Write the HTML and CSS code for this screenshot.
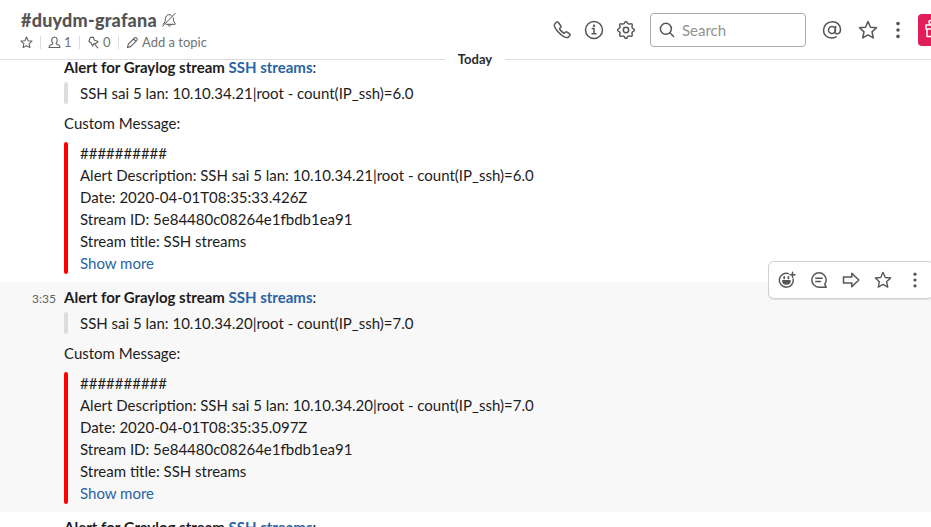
FILE: index.html
```html
<!DOCTYPE html>
<html lang="en">
<head>
<meta charset="utf-8">
<title>duydm-grafana</title>
<link rel="stylesheet" href="styles.css">
</head>
<body>
<svg width="0" height="0" class="defs">
  <symbol id="star" viewBox="0 0 20 20"><path d="M10 1.500l2.500 5.700 6 .6-4.500 4.100 1.300 6L10 14.900l-5.300 3 1.300-6-4.500-4.100 6-.6z"/></symbol>
  <symbol id="dots" viewBox="0 0 20 20"><g fill="currentColor" stroke="none"><circle cx="10" cy="3.600" r="1.800"/><circle cx="10" cy="10" r="1.800"/><circle cx="10" cy="16.400" r="1.800"/></g></symbol>
</svg>
<div class="app">
  <header class="header">
    <div class="channel">
      <h1 class="name"><span>#duydm-grafana</span>
        <svg class="icon bell" viewBox="0 0 16 16"><path d="M3.200 11.200C4.800 9.600 4 7 5 4.700C6.200 2 9.800 2 11 4.200M12.300 6c.1 2.300.2 3.700 1.900 5.500v.8H5.200M7 12.500c0 2.300 3 2.300 3 0M1.500 14.300L14.200 1.400M3.200 11.200l-1.100.9"/></svg>
      </h1>
      <div class="meta">
        <svg class="icon s13" viewBox="0 0 20 20"><use href="#star"/></svg>
        <i class="sep"></i>
        <svg class="icon s13" viewBox="0 0 13 13"><path d="M6.500 1C9.800 1 9.600 5 8.600 6.600 8 7.800 8 8 8.800 8.300l1.700.6c1 .4 1.500 1.200 1.500 2.600H1c0-1.400.5-2.200 1.500-2.600l1.700-.6C5 8 5 7.800 4.400 6.600 3.400 5 3.200 1 6.500 1z"/></svg>
        <span class="one">1</span>
        <i class="sep"></i>
        <svg class="icon s13" viewBox="0 0 13 13"><path d="M3.400 1.400l3.100 0 .6 2.600 3.900 1.500-1.600 1.600-2.600.6-1.200 2.400L4.200 7 1.900 5.200zM7.500 8.200l3.400 3.600"/></svg>
        <span class="zero">0</span>
        <i class="sep"></i>
        <svg class="icon s13 pencil" viewBox="0 0 13 13"><path d="M1.500 11.500l.8-3.300L8.500 2c1.500-1.400 3.700.7 2.300 2.300l-6.200 6.300zM7.600 3l2.300 2.300"/></svg>
        <span class="topic">Add a topic</span>
      </div>
    </div>
    <div class="tools">
      <svg class="icon s20" viewBox="0 0 20 20"><path d="M4.500 2.300L2.700 4c-.8 1 0 4 3.500 8s8 6.400 10 5.300l1.600-1.700c.5-.7.400-1.200-.2-1.700l-2.500-1.800c-.7-.5-1.200-.4-1.700.2l-.9 1c-.6.7-5.500-4.200-4.900-4.900l1-.9c.6-.5.600-1.100.1-1.700L6.400 2.500c-.6-.8-1.300-.8-1.900-.2z"/></svg>
      <svg class="icon s20" viewBox="0 0 20 20"><circle cx="10" cy="10" r="8.500"/><path d="M8.300 8.500H10v5M8 13.800h4"/><circle cx="10" cy="5.700" r=".5"/></svg>
      <svg class="icon s20" viewBox="0 0 20 20"><path d="M8.100 3.600Q10-.6 11.900 3.600L13.200 4.100Q17.500 2.500 15.900 6.800L16.400 8.100Q20.600 10 16.400 11.900L15.900 13.200Q17.500 17.500 13.200 15.900L11.900 16.400Q10 20.600 8.100 16.400L6.800 15.900Q2.500 17.500 4.100 13.200L3.600 11.900Q-.6 10 3.600 8.100L4.100 6.800Q2.500 2.500 6.800 4.100z"/><circle cx="10" cy="10" r="2.700"/></svg>
      <label class="search">
        <svg class="icon glass" viewBox="0 0 16 16"><circle cx="6.900" cy="6.800" r="5.500"/><path d="M10.900 10.800l3.700 3.700"/></svg>
        <span>Search</span>
      </label>
      <svg class="icon s20 at" viewBox="0 0 20 20"><circle cx="10" cy="10" r="3.500"/><path d="M13.600 6.500l-.5 5.200c-.2 3.300 5.400 2.800 5.400-1.900C18.500 4.800 15 1.700 10.400 1.700 5.500 1.700 1.500 5.400 1.500 10.200c0 4.600 3.300 7.800 8 7.800 2 0 3.300-.4 4.600-1.100"/></svg>
      <svg class="icon s20 fav" viewBox="0 0 20 20"><use href="#star"/></svg>
      <svg class="icon s20 more" viewBox="0 0 20 20"><use href="#dots"/></svg>
      <div class="gift"><svg class="icon s20" viewBox="0 0 20 20"><path d="M2 6h16v4H2zM3 10h14v7.500H3zM10 6v11M10 6C4 6 4 1.500 6.500 1.500S10 6 10 6s1-4.500 3.500-4.500S16 6 10 6"/></svg></div>
    </div>
  </header>
  <div class="day"><span>Today</span></div>
  <main class="thread">
    <article class="message">
      <div class="title"><b>Alert for Graylog stream <a>SSH streams</a></b>:</div>
      <blockquote class="quote">SSH sai 5 lan: 10.10.34.21|root - count(IP_ssh)=6.0</blockquote>
      <p class="label">Custom Message:</p>
      <div class="attachment">
        <div>##########</div>
        <div>Alert Description: SSH sai 5 lan: 10.10.34.21|root - count(IP_ssh)=6.0</div>
        <div>Date: 2020-04-01T08:35:33.426Z</div>
        <div>Stream ID: 5e84480c08264e1fbdb1ea91</div>
        <div>Stream title: SSH streams</div>
        <div><a>Show more</a></div>
      </div>
    </article>
    <article class="message hovered">
      <time class="time">3:35</time>
      <div class="title"><b>Alert for Graylog stream <a>SSH streams</a></b>:</div>
      <blockquote class="quote">SSH sai 5 lan: 10.10.34.20|root - count(IP_ssh)=7.0</blockquote>
      <p class="label">Custom Message:</p>
      <div class="attachment">
        <div>##########</div>
        <div>Alert Description: SSH sai 5 lan: 10.10.34.20|root - count(IP_ssh)=7.0</div>
        <div>Date: 2020-04-01T08:35:35.097Z</div>
        <div>Stream ID: 5e84480c08264e1fbdb1ea91</div>
        <div>Stream title: SSH streams</div>
        <div><a>Show more</a></div>
      </div>
      <div class="actions">
        <svg class="icon s18" viewBox="0 0 18 18"><path d="M10.500 2.600A7 7 0 1 0 15.200 8M14.500 1.200v5M12 3.700h5"/><path d="M4.800 9.700h7.200c0 4.500-7.200 4.500-7.200 0z" fill="currentColor"/><path d="M6.200 6v1.300M10.400 6v1.300" stroke-width="1.800"/></svg>
        <svg class="icon s18" viewBox="0 0 18 18"><path d="M16.200 16.200H9A7.200 7.200 0 1 1 16.200 9c0 1.800-.6 3-1.500 4.200zM5.800 7.300h6.400M5.800 10.500h4.700"/></svg>
        <svg class="icon s18" viewBox="0 0 18 18"><path d="M1.500 6h8.300V2.200L16.800 9l-7 6.800V12H1.500z"/></svg>
        <svg class="icon s18" viewBox="0 0 20 20"><use href="#star"/></svg>
        <svg class="icon s18 dots" viewBox="0 0 20 20"><use href="#dots"/></svg>
      </div>
    </article>
    <article class="message">
      <div class="title"><b>Alert for Graylog stream <a>SSH streams</a></b>:</div>
    </article>
  </main>
</div>
</body>
</html>
```
FILE: styles.css
```css
* { box-sizing: border-box; }
body {
  margin: 0;
  background: #fff;
  color: #1d1c1d;
  font: 15px/22px Lato, "Liberation Sans", sans-serif;
}
h1, p, blockquote { margin: 0; }
a { color: #2a63a3; }
.defs { position: absolute; }
.app {
  position: relative;
  display: flex;
  flex-direction: column;
  height: 527px;
  overflow: hidden;
}
.icon {
  display: block;
  flex: none;
  fill: none;
  stroke: currentColor;
  stroke-width: 1.5;
  stroke-linejoin: round;
  stroke-linecap: round;
}
.s13 { width: 13px; height: 13px; stroke-width: 1.1; }
.s18 { width: 18px; height: 18px; }
.s20 { width: 20px; height: 20px; }

.header {
  display: flex;
  flex: none;
  justify-content: space-between;
  height: 60px;
  padding-left: 20px;
  border-bottom: 1px solid #ddd;
  color: #565556;
}
.channel { padding-top: 9px; }
.name {
  display: flex;
  align-items: center;
  gap: 4px;
  padding-left: 1px;
  font-size: 18px;
  font-weight: 900;
  line-height: 22px;
  letter-spacing: .22px;
}
.bell { width: 16px; height: 16px; stroke-width: 1; }
.meta {
  display: flex;
  align-items: center;
  height: 20px;
  margin-top: 1px;
  font-size: 13px;
  line-height: 20px;
  color: #717274;
}
.meta .icon { color: #616061; }
.meta .s13:first-child { stroke-width: 1.6; }
.sep { width: 1px; height: 13px; margin: 0 7px; background: #ddd; }
.one, .zero { width: 8px; margin-left: 3px; }
.topic { margin-left: 3px; }
.tools { display: flex; align-items: center; gap: 12px; width: 379px; flex: none; }
.search {
  display: flex;
  align-items: center;
  gap: 7px;
  flex: none;
  width: 156px;
  height: 34px;
  margin: 0 4px 0 2px;
  padding-left: 8px;
  border: 1px solid #aaa;
  border-radius: 4px;
  color: #929292;
}
.glass { width: 16px; height: 16px; color: #565556; }
.fav { margin-left: 4px; }
.more { margin-left: -2px; }
.gift {
  flex: none;
  width: 32px;
  height: 32px;
  margin-left: -2px;
  padding: 5px 6px;
  border-radius: 4px;
  background: #e01e5a;
  color: #fff;
}
.day {
  position: absolute;
  z-index: 1;
  top: 48px;
  left: 0;
  width: 950px;
  text-align: center;
  font-size: 13px;
  font-weight: 700;
  color: #2c2d30;
}
.day span { display: inline-block; padding: 0 13px; background: linear-gradient(#fff, #fff) center / 100% 5px no-repeat; }

.thread { margin-top: -8px; position: relative; flex: none; clip-path: inset(8px 0 0); }
.message { position: relative; padding: 4px 0 8px 64px; }
.hovered { background: #f8f8f8; }
.hovered, .hovered .actions { z-index: 1; }
.time {
  position: absolute;
  top: 6px;
  left: 0;
  width: 56px;
  text-align: right;
  font-size: 12px;
  color: #616061;
}
.quote, .attachment { position: relative; padding-left: 16px; }
.quote { margin-top: 4px; }
.quote::before, .attachment::before {
  content: "";
  position: absolute;
  inset: 0 auto 0 0;
  width: 4px;
  border-radius: 2px;
  background: #ddd;
}
.attachment::before { background: #f00; }
.label { margin: 8px 0; }
.actions {
  position: absolute;
  top: -21px;
  right: -3px;
  display: flex;
  align-items: center;
  gap: 14px;
  width: 166px;
  height: 38px;
  padding-left: 9px;
  border: 1px solid #d0d0d0;
  border-radius: 6px;
  background: #fff;
  color: #565556;
  box-shadow: 0 1px 1px rgba(0, 0, 0, .08);
}
```
